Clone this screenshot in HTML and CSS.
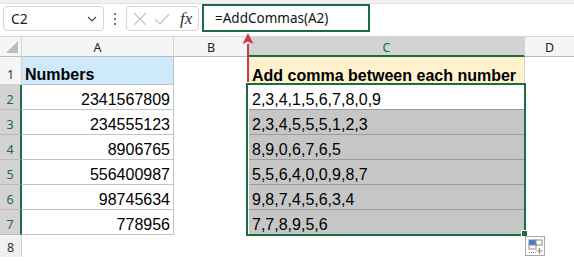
FILE: index.html
```html
<!DOCTYPE html>
<html>
<head>
<meta charset="utf-8">
<link rel="stylesheet" href="styles.css">
</head>
<body>
<div class="app">
  <div class="topband"></div>
  <div class="fbar">
    <div class="namebox">
      <span class="nb-text">C2</span>
      <svg class="chev" width="10" height="6" viewBox="0 0 10 6"><path d="M1 1 L5 5 L9 1" fill="none" stroke="#444" stroke-width="1.2"/></svg>
    </div>
    <div class="kebab"><i></i><i></i><i></i></div>
    <div class="fxbox">
      <svg width="16" height="16" viewBox="0 0 16 16"><path d="M2 2 L14 14 M14 2 L2 14" stroke="#c4c4c4" stroke-width="1.2" fill="none"/></svg>
      <svg width="18" height="16" viewBox="0 0 18 16"><path d="M2 8 L7 13 L16 3" stroke="#c4c4c4" stroke-width="1.2" fill="none"/></svg>
      <span class="fx">fx</span>
    </div>
    <div class="formula">=AddCommas(A2)</div>
  </div>
  <div class="sheet">
    <div class="corner"><span class="tri"></span></div>
    <div class="ch">A</div>
    <div class="ch">B</div>
    <div class="ch ch-sel">C</div>
    <div class="ch ch-last">D</div>

    <div class="rh">1</div>
    <div class="cell a a-head">Numbers</div>
    <div class="cell b"></div>
    <div class="cell c c-head">Add comma between each number</div>
    <div class="cell d"></div>

    <div class="rh rh-sel">2</div>
    <div class="cell a num">2341567809</div>
    <div class="cell b"></div>
    <div class="cell c c-act">2,3,4,1,5,6,7,8,0,9</div>
    <div class="cell d"></div>

    <div class="rh rh-sel">3</div>
    <div class="cell a num">234555123</div>
    <div class="cell b"></div>
    <div class="cell c c-sh">2,3,4,5,5,5,1,2,3</div>
    <div class="cell d"></div>

    <div class="rh rh-sel">4</div>
    <div class="cell a num">8906765</div>
    <div class="cell b"></div>
    <div class="cell c c-sh">8,9,0,6,7,6,5</div>
    <div class="cell d"></div>

    <div class="rh rh-sel">5</div>
    <div class="cell a num">556400987</div>
    <div class="cell b"></div>
    <div class="cell c c-sh">5,5,6,4,0,0,9,8,7</div>
    <div class="cell d"></div>

    <div class="rh rh-sel">6</div>
    <div class="cell a num">98745634</div>
    <div class="cell b"></div>
    <div class="cell c c-sh">9,8,7,4,5,6,3,4</div>
    <div class="cell d"></div>

    <div class="rh rh-sel">7</div>
    <div class="cell a num">778956</div>
    <div class="cell b"></div>
    <div class="cell c c-sh">7,7,8,9,5,6</div>
    <div class="cell d"></div>

    <div class="rh rh-last">8</div>
    <div class="cell e"></div>
    <div class="cell e"></div>
    <div class="cell e"></div>
    <div class="cell e"></div>

    <div class="selbox"></div>
    <div class="handle"></div>
    <div class="qa">
      <svg width="18" height="18" viewBox="0 0 18 18">
        <rect x="3" y="3" width="7" height="5" fill="#3b78e7" stroke="#8a8a8a" stroke-width="1"/>
        <rect x="10" y="3" width="6" height="5" fill="#fff" stroke="#8a8a8a" stroke-width="1"/>
        <rect x="3" y="8" width="7" height="4" fill="#fff" stroke="#8a8a8a" stroke-width="1"/>
        <path d="M3 15.5 H10" stroke="#8a8a8a" stroke-width="1" stroke-dasharray="1 1"/>
        <path d="M13.5 11 V17 M10.5 14 H16.5" stroke="#8a8a8a" stroke-width="1.2"/>
      </svg>
    </div>
    <svg class="arrow" width="14" height="52" viewBox="0 0 14 52">
      <path d="M7 12 V50" stroke="#cc3a4a" stroke-width="2"/>
      <path d="M7 1 L12.5 12 L7 9.5 L1.5 12 Z" fill="#cc3a4a"/>
    </svg>
  </div>
</div>
</body>
</html>
```

FILE: styles.css
```css
* { box-sizing: border-box; }
html, body { margin: 0; padding: 0; background: #ffffff; }
.app { width: 574px; height: 262px; overflow: hidden; position: relative; }

.topband { height: 4px; background: #f0f0f0; border-bottom: 1px solid #e2e2e2; }

.fbar {
  height: 33px;
  display: flex;
  align-items: flex-start;
  padding-left: 3px;
  border-bottom: 1px solid #d6d6d6;
  font-family: "Noto Sans", "DejaVu Sans", sans-serif;
}
.namebox {
  margin-top: 2px;
  width: 101px;
  height: 25px;
  border: 1px solid #d4d4d4;
  border-radius: 4px;
  display: flex;
  align-items: center;
  justify-content: space-between;
  padding: 0 6px 0 7px;
  font-size: 14px;
  color: #222;
}
.chev { margin-top: 1px; }
.kebab {
  width: 22px;
  margin-top: 9px;
  display: flex;
  flex-direction: column;
  align-items: center;
  gap: 3px;
}
.kebab i { display: block; width: 2px; height: 2px; background: #444; border-radius: 1px; }
.fxbox {
  margin-top: 2px;
  width: 73px;
  height: 25px;
  border: 1px solid #d4d4d4;
  border-radius: 4px;
  display: flex;
  align-items: center;
  padding-left: 5px;
  gap: 5px;
}
.fx {
  margin-left: 4px;
  font-family: "Liberation Serif", "DejaVu Serif", serif;
  font-style: italic;
  font-size: 17px;
  color: #333;
}
.formula {
  margin-left: 3px;
  margin-top: 0px;
  width: 168px;
  height: 28px;
  border: 2px solid #1e6b41;
  display: flex;
  align-items: center;
  padding-left: 11px;
  font-size: 13.5px;
  color: #111;
}

.sheet {
  position: relative;
  display: grid;
  grid-template-columns: 22px 152px 75px 276px 1fr;
  grid-template-rows: 20px 28px repeat(6, 25px) 22px;
  font-family: "Liberation Sans", Arial, sans-serif;
}
.corner {
  background: #f5f5f5;
  border-right: 1px solid #d4d4d4;
  border-bottom: 1px solid #bdbdbd;
  position: relative;
}
.tri {
  position: absolute;
  right: 3px;
  bottom: 3px;
  width: 0; height: 0;
  border-left: 12px solid transparent;
  border-bottom: 12px solid #bcbcbc;
}
.ch {
  background: #f5f5f5;
  border-right: 1px solid #d4d4d4;
  border-bottom: 1px solid #bdbdbd;
  display: flex;
  align-items: center;
  justify-content: center;
  font-family: "Noto Sans", "DejaVu Sans", sans-serif;
  font-size: 12.5px;
  color: #222;
  padding-top: 1px;
}
.ch-sel {
  background: #d3d3d3;
  color: #1e6b41;
  border-bottom: 2px solid #1e6b41;
  padding-top: 3px;
}
.ch-last { border-right: none; }

.rh {
  background: #f5f5f5;
  border-right: 1px solid #d4d4d4;
  border-bottom: 1px solid #d4d4d4;
  display: flex;
  align-items: flex-end;
  justify-content: center;
  padding-bottom: 1px;
  font-family: "Noto Sans", "DejaVu Sans", sans-serif;
  font-size: 12.5px;
  color: #333;
}
.rh-sel {
  background: #d3d3d3;
  color: #1e6b41;
  border-right: 2px solid #1e6b41;
  border-bottom-color: #bdbdbd;
}
.rh-last { background: #f0f0f0; border-bottom: none; }

.cell {
  display: flex;
  align-items: flex-end;
  padding: 0 3px 0 3px;
  font-size: 16px;
  color: #000;
  white-space: nowrap;
  overflow: visible;
}
.a { border-right: 1px solid #c4c4c4; border-bottom: 1px solid #c4c4c4; }
.a-head { background: #cde9fb; font-weight: bold; }
.num { justify-content: flex-end; }
.b, .d, .e { background: #fff; }
.c { border-bottom: 1px solid #9c9c9c; border-right: 1px solid #9c9c9c; }
.c-head { background: #fff2cc; font-weight: bold; border-bottom: none; border-right: 1px solid #d4d4d4; }
.c-act { background: #fff; }
.c-sh { background: #c6c6c6; }

.selbox {
  position: absolute;
  left: 246px;
  top: 46px;
  width: 280px;
  height: 153px;
  border: 2px solid #1e6b41;
  pointer-events: none;
}
.handle {
  position: absolute;
  left: 521px;
  top: 193px;
  width: 7px;
  height: 7px;
  background: #1e6b41;
  border: 1px solid #fff;
}
.qa {
  position: absolute;
  left: 525px;
  top: 199px;
  width: 20px;
  height: 20px;
  border: 1px solid #a8a8a8;
  background: #fff;
  display: flex;
  align-items: center;
  justify-content: center;
}
.arrow {
  position: absolute;
  left: 241px;
  top: -5px;
}
```
